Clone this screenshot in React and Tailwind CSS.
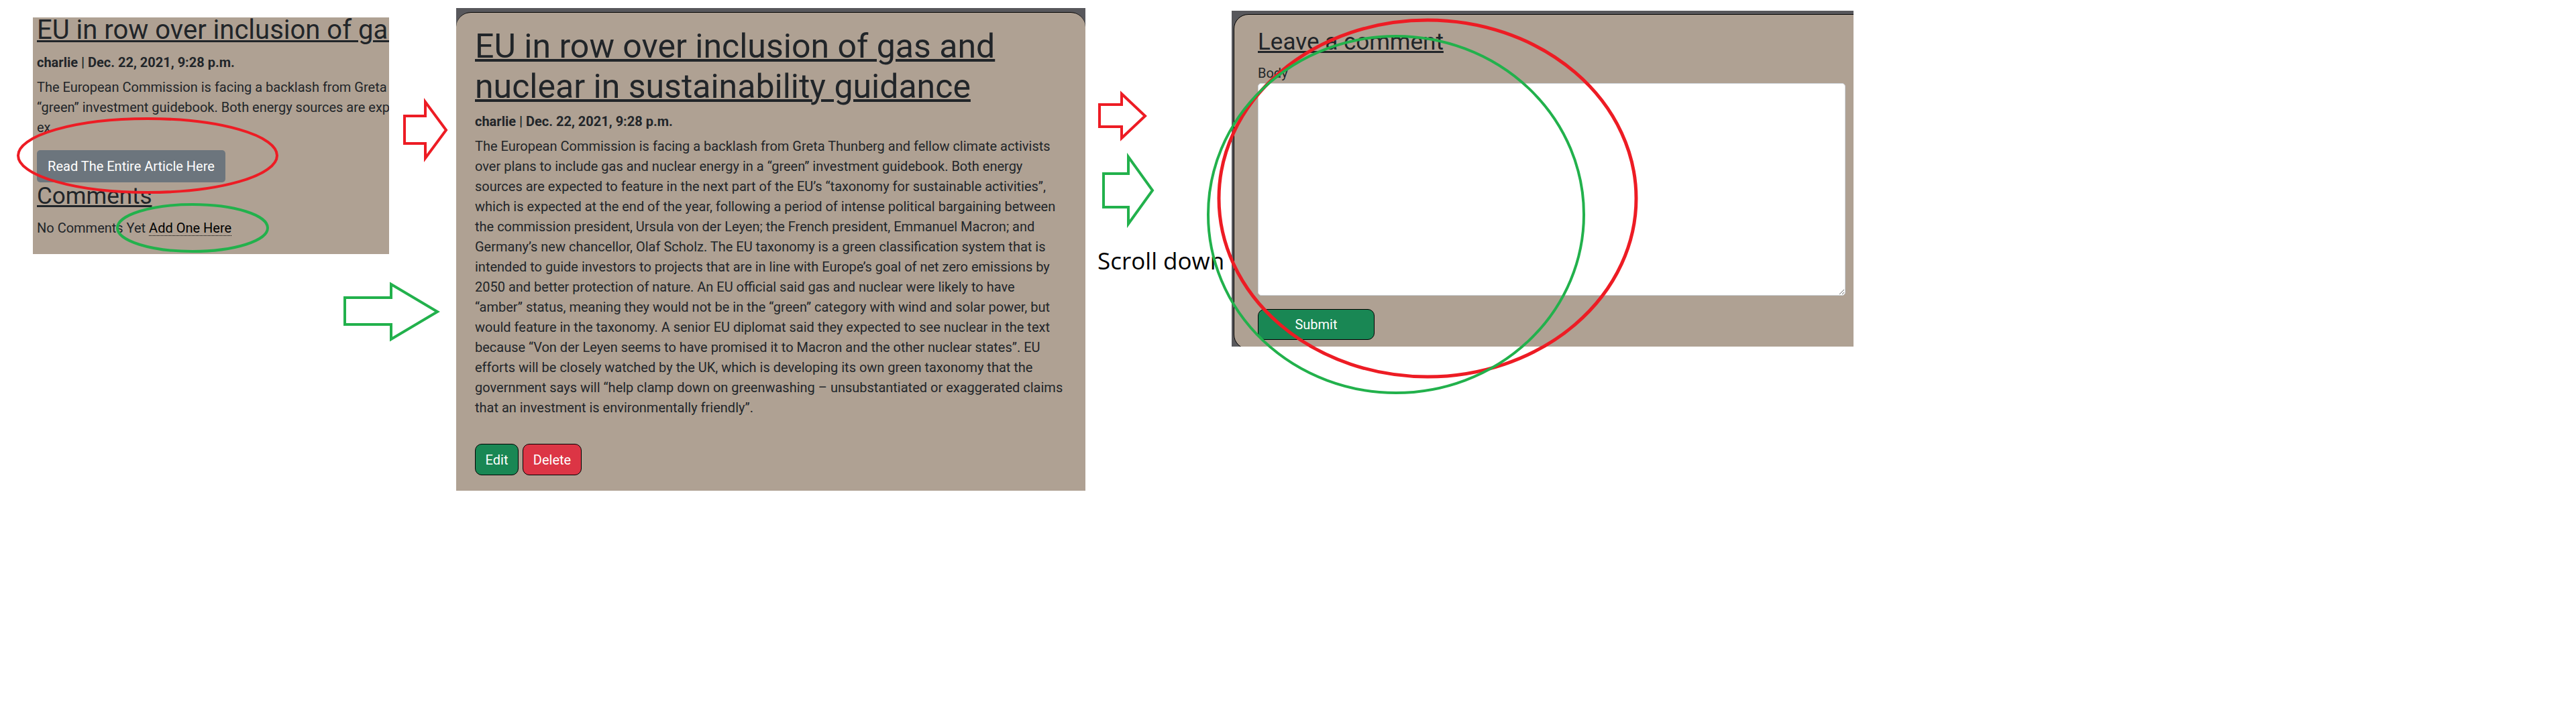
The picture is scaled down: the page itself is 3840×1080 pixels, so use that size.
import React from 'react';

const articleLines = [
    'The European Commission is facing a backlash from Greta Thunberg and fellow climate activists',
    'over plans to include gas and nuclear energy in a “green” investment guidebook. Both energy',
    'sources are expected to feature in the next part of the EU’s “taxonomy for sustainable activities”,',
    'which is expected at the end of the year, following a period of intense political bargaining between',
    'the commission president, Ursula von der Leyen; the French president, Emmanuel Macron; and',
    'Germany’s new chancellor, Olaf Scholz. The EU taxonomy is a green classification system that is',
    'intended to guide investors to projects that are in line with Europe’s goal of net zero emissions by',
    '2050 and better protection of nature. An EU official said gas and nuclear were likely to have',
    '“amber” status, meaning they would not be in the “green” category with wind and solar power, but',
    'would feature in the taxonomy. A senior EU diplomat said they expected to see nuclear in the text',
    'because “Von der Leyen seems to have promised it to Macron and the other nuclear states”. EU',
    'efforts will be closely watched by the UK, which is developing its own green taxonomy that the',
    'government says will “help clamp down on greenwashing – unsubstantiated or exaggerated claims',
    'that an investment is environmentally friendly”.',
];

const previewLines = [
    'The European Commission is facing a backlash from Greta Thunberg and fellow climate activists over plans to include gas and nuclear energy in a',
    '“green” investment guidebook. Both energy sources are expected to feature in the next part of the EU’s “taxonomy for sustainable activities”,',
    'ex',
];

const RED = '#ed1c24';
const GREEN = '#22b14c';

// hand-drawn arrows: shaft left, shaft top/bottom, head base x, head top/bottom, tip
const arrow = (x0, s0, s1, hx, h0, h1, tx, ty = (h0 + h1) / 2) =>
    `${x0},${s0} ${hx},${s0} ${hx},${h0} ${tx},${ty} ${hx},${h1} ${hx},${s1} ${x0},${s1}`;

const ArticlePreview = () => (
    <div className="ml-[49px] mt-[26px] w-[531px] h-[353px] shrink-0 overflow-hidden bg-[#afa193] pl-[6px]">
        <h2 className="mt-[-5px] text-[40px] leading-[48px] underline decoration-[3px] whitespace-nowrap">
            EU in row over inclusion of gas and nuclear in sustainability guidance
        </h2>
        <p className="mt-[9px] text-[20px] leading-[30px] font-bold whitespace-nowrap">charlie | Dec. 22, 2021, 9:28 p.m.</p>
        <p className="mt-[7px] text-[20px] leading-[30px]">
            {previewLines.map((line) => (
                <span key={line} className="block whitespace-nowrap">{line}</span>
            ))}
        </p>
        <button className="mt-[19px] flex h-[48px] w-[281px] items-center justify-center rounded-[5px] bg-[#6c757d] text-[20px] leading-[30px] text-white">
            Read The Entire Article Here
        </button>
        <h3 className="text-[35px] leading-[42px] underline decoration-[3px]">Comments</h3>
        <p className="mt-[11px] text-[20px] leading-[30px] whitespace-nowrap">
            No Comments Yet{' '}
            <a className="text-black underline decoration-dotted decoration-1 underline-offset-4">Add One Here</a>
        </p>
    </div>
);

const ArticleDetail = () => (
    <div className="ml-[100px] mt-[12px] w-[938px] h-[720px] shrink-0 overflow-hidden bg-[#58585c] pt-[6px]">
        <div className="h-[714px] rounded-t-[22px] border-t border-black bg-[#afa193] pl-[28px] pt-[20px]">
            <h1 className="text-[50px] leading-[60px] underline decoration-[4px] whitespace-nowrap">
                EU in row over inclusion of gas and
                <br />
                nuclear in sustainability guidance
            </h1>
            <p className="mt-[7px] text-[20px] leading-[30px] font-bold">charlie | Dec. 22, 2021, 9:28 p.m.</p>
            <p className="mt-[7px] text-[20px] leading-[30px]">
                {articleLines.map((line) => (
                    <span key={line} className="block whitespace-nowrap">{line}</span>
                ))}
            </p>
            <div className="mt-[39px] flex gap-[6px]">
                <button className="flex h-[47px] w-[65px] items-center justify-center rounded-[10px] border border-black bg-[#198754] text-[20px] leading-[30px] text-white">
                    Edit
                </button>
                <button className="flex h-[47px] w-[88px] items-center justify-center rounded-[10px] border border-black bg-[#dc3545] text-[20px] leading-[30px] text-white">
                    Delete
                </button>
            </div>
        </div>
    </div>
);

const CommentForm = () => (
    <div className="mt-[16px] w-[927px] h-[501px] shrink-0 overflow-hidden bg-[#58585c] pl-[3px] pt-[5px]">
        <div className="w-[960px] h-[500px] rounded-[22px] border border-black bg-[#afa193] pl-[35px] pt-[20px]">
            <h3 className="text-[35px] leading-[42px] underline decoration-[3px]">Leave a comment</h3>
            <label className="mt-[10px] block text-[20px] leading-[30px]">Body</label>
            <textarea className="block h-[317px] w-[876px] rounded-[5px] border border-[#ced4da] bg-white" />
            <button className="mt-[20px] flex h-[46px] w-[174px] items-center justify-center rounded-[10px] border border-black bg-[#198754] text-[20px] leading-[30px] text-white">
                Submit
            </button>
        </div>
    </div>
);

const Annotations = () => (
    <svg className="pointer-events-none absolute left-0 top-0" width="3840" height="1080" fill="none">
        <ellipse cx="220" cy="232" rx="193" ry="55" stroke={RED} strokeWidth="4" />
        <ellipse cx="287" cy="340" rx="112" ry="35" stroke={GREEN} strokeWidth="4" />
        <polygon points={arrow(603, 173, 214, 634, 152, 236, 665)} stroke={RED} strokeWidth="4" fill="white" />
        <polygon points={arrow(514, 444, 484, 583, 424, 506, 652)} stroke={GREEN} strokeWidth="4" fill="white" />
        <polygon points={arrow(1639, 156, 189, 1672, 140, 206, 1707, 173)} stroke={RED} strokeWidth="4" fill="white" />
        <polygon points={arrow(1645, 259, 309, 1682, 234, 334, 1718, 284)} stroke={GREEN} strokeWidth="4" fill="white" />
        <ellipse cx="2128" cy="296" rx="311" ry="266" stroke={RED} strokeWidth="5" />
        <ellipse cx="2081" cy="320" rx="280" ry="266" stroke={GREEN} strokeWidth="4" />
    </svg>
);

export default function App() {
    return (
        <div className="relative h-[1080px] w-[3840px] overflow-hidden bg-white font-['Roboto',sans-serif] text-[#212529]">
            <div className="flex items-start">
                <ArticlePreview />
                <ArticleDetail />
                <div className="mt-[371px] w-[218px] shrink-0 pl-[18px] font-['Open_Sans',sans-serif] text-[35px] leading-[35px] text-black whitespace-nowrap">
                    Scroll down
                </div>
                <CommentForm />
            </div>
            <Annotations />
        </div>
    );
}
